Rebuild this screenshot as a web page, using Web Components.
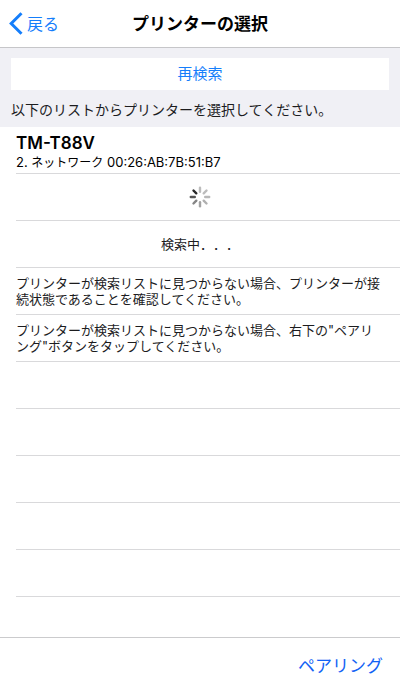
<!DOCTYPE html>
<html lang="ja">
<head>
<meta charset="utf-8">
<meta name="viewport" content="width=device-width, initial-scale=1">
<title>プリンターの選択</title>
<style>
html, body { height: 100%; margin: 0; }
body {
  --blue: #157efb;
  --line: #d9d9db;
  background: #fff;
  color: #000;
  font-family: Inter, "Noto Sans CJK JP", sans-serif;
  text-spacing-trim: space-all;
}
</style>
</head>
<body>
<printer-screen></printer-screen>
<script>
const define = (name, html) => {
  const template = document.createElement("template");
  template.innerHTML = html;
  customElements.define(name, class extends HTMLElement {
    constructor() {
      super();
      this.attachShadow({ mode: "open" }).append(template.content.cloneNode(true));
    }
  });
};

define("nav-bar", `
<style>
:host { display: grid; grid-template-columns: 1fr auto 1fr; align-items: center; height: 47px; border-bottom: 1px solid #c6c6c9; }
h1 { margin: 0; font-size: 17px; line-height: 24px; font-weight: 700; }
button { display: flex; align-items: center; gap: 4px; justify-self: start; margin: 0; padding: 0 0 0 9px; border: 0; background: none; color: var(--blue); font: inherit; font-size: 16px; line-height: 24px; cursor: pointer; }
svg { display: block; }
</style>
<button type="button"><svg width="14" height="23" viewBox="0 0 14 23" fill="none" stroke="currentColor" stroke-width="3" aria-hidden="true"><path d="M12.5 1.2 2.2 11.5 12.5 21.8"/></svg><slot name="back"></slot></button>
<h1><slot></slot></h1>`);

define("search-header", `
<style>
:host { display: block; padding: 10px 11px 7px; background: #f0f0f5; }
button { display: block; width: 100%; height: 32px; margin: 0 0 9px; padding: 0; border: 0; background: #fff; color: var(--blue); font: inherit; font-size: 15px; line-height: 32px; cursor: pointer; }
p { margin: 0; font-size: 14px; line-height: 21px; color: #1c1c1e; }
</style>
<button type="button"><slot name="action"></slot></button>
<p><slot></slot></p>`);

define("list-row", `
<style>
:host { display: flex; flex-direction: column; justify-content: center; box-sizing: border-box; min-height: 47px; margin-left: 16px; padding-right: 18px; border-bottom: 1px solid var(--line); font-size: 13px; line-height: 16px; color: #1c1c1e; }
:host([centered]) { align-items: center; padding-right: 16px; font-family: "Noto Sans CJK JP", sans-serif; }
</style>
<slot></slot>`);

define("printer-entry", `
<style>
:host { display: block; padding-top: 4px; color: #000; }
h2 { margin: 0; font-size: 17px; line-height: 20px; font-weight: 600; }
p { margin: 0; font-size: 13px; line-height: 18px; }
.link { font-size: 12px; }
</style>
<h2><slot name="name"></slot></h2>
<p><slot name="index"></slot> <span class="link"><slot name="link"></slot></span> <slot></slot></p>`);

define("busy-spinner", `
<style>:host { display: block; } svg { display: block; }</style>
<svg width="22" height="22" viewBox="-11 -11 22 22" stroke-width="2.4" stroke-linecap="round" role="img" aria-label="検索中">
<path d="M0-5.2V-9.2" stroke="#bcbcbc"/>
<path d="M3.7-3.7 6.5-6.5" stroke="#bcbcbc"/>
<path d="M5.2 0H9.2" stroke="#b8b8b8"/>
<path d="M3.7 3.7 6.5 6.5" stroke="#b0b0b0"/>
<path d="M0 5.2V9.2" stroke="#a3a3a3"/>
<path d="M-3.7 3.7-6.5 6.5" stroke="#858585"/>
<path d="M-5.2 0H-9.2" stroke="#555"/>
<path d="M-3.7-3.7-6.5-6.5" stroke="#292929"/>
</svg>`);

define("bottom-bar", `
<style>
:host { display: flex; justify-content: flex-end; align-items: center; box-sizing: border-box; height: 53px; padding: 4px 17px 0; border-top: 1px solid #cbcbcd; background: #fff; }
button { margin: 0; padding: 0; border: 0; background: none; color: #1262f5; font: inherit; font-size: 17px; line-height: 24px; cursor: pointer; }
</style>
<button type="button"><slot></slot></button>`);

define("printer-screen", `
<style>
:host { display: flex; flex-direction: column; min-height: 100%; }
main { flex: 1; }
</style>
<nav-bar><span slot="back">戻る</span>プリンターの選択</nav-bar>
<search-header><span slot="action">再検索</span>以下のリストからプリンターを選択してください。</search-header>
<main>
<list-row><printer-entry><span slot="name">TM-T88V</span><span slot="index">2.</span><span slot="link">ネットワーク</span>00:26:AB:7B:51:B7</printer-entry></list-row>
<list-row centered><busy-spinner></busy-spinner></list-row>
<list-row centered><span>検索中．．．</span></list-row>
<list-row><span>プリンターが検索リストに見つからない場合、プリンターが接続状態であることを確認してください。</span></list-row>
<list-row><span>プリンターが検索リストに見つからない場合、右下の"ペアリング"ボタンをタップしてください。</span></list-row>
<list-row></list-row>
<list-row></list-row>
<list-row></list-row>
<list-row></list-row>
<list-row></list-row>
</main>
<bottom-bar>ペアリング</bottom-bar>`);
</script>
</body>
</html>
